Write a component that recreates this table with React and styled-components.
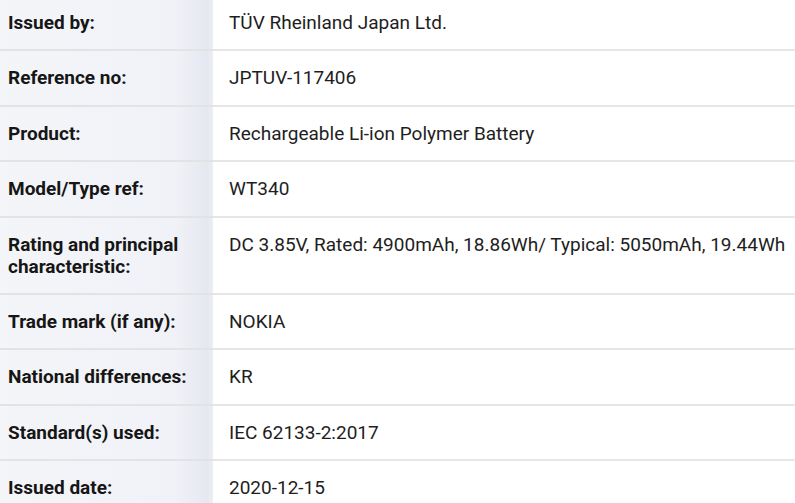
import React from 'react'
import styled, { createGlobalStyle } from 'styled-components'

const Global = createGlobalStyle`
  html, body {
    margin: 0;
    padding: 0;
    background: #fff;
    overflow: hidden;
  }
  body {
    font-family: Roboto, "Noto Sans", sans-serif;
    color: #202124;
  }
`

const Table = styled.div`
  margin-top: -4px;
  display: grid;
  grid-template-columns: 213px 1fr;
  width: 795px;
`

const Row = styled.div`
  display: contents;
`

const Label = styled.div`
  padding: 16px 8px 15.4px 8px;
  font-size: 19px;
  line-height: 22px;
  font-weight: 700;
  color: #161616;
  background: linear-gradient(to right, #f4f5f9 0%, #f1f2f7 82%, #e6e8f1 97%, #edeef4 100%);
  border-bottom: ${p => (p.$last ? '0' : '2px solid #e3e3e6')};
`

const Value = styled.div`
  padding: 16px 8px 15.4px 16px;
  font-size: 19px;
  line-height: 22px;
  color: #1e1e1e;
  background: #fff;
  white-space: nowrap;
  border-bottom: ${p => (p.$last ? '0' : '2px solid #e6e6e6')};
`

const rows = [
  ['Issued by:', 'TÜV Rheinland Japan Ltd.'],
  ['Reference no:', 'JPTUV-117406'],
  ['Product:', 'Rechargeable Li-ion Polymer Battery'],
  ['Model/Type ref:', 'WT340'],
  ['Rating and principal characteristic:', 'DC 3.85V, Rated: 4900mAh, 18.86Wh/ Typical: 5050mAh, 19.44Wh'],
  ['Trade mark (if any):', 'NOKIA'],
  ['National differences:', 'KR'],
  ['Standard(s) used:', 'IEC 62133-2:2017'],
  ['Issued date:', '2020-12-15'],
]

export default function App () {
  return (
    <>
      <Global />
      <Table>
        {rows.map(([k, v], i) => (
          <Row key={k}>
            <Label $last={i === rows.length - 1}>{k}</Label>
            <Value $last={i === rows.length - 1}>{v}</Value>
          </Row>
        ))}
      </Table>
    </>
  )
}
